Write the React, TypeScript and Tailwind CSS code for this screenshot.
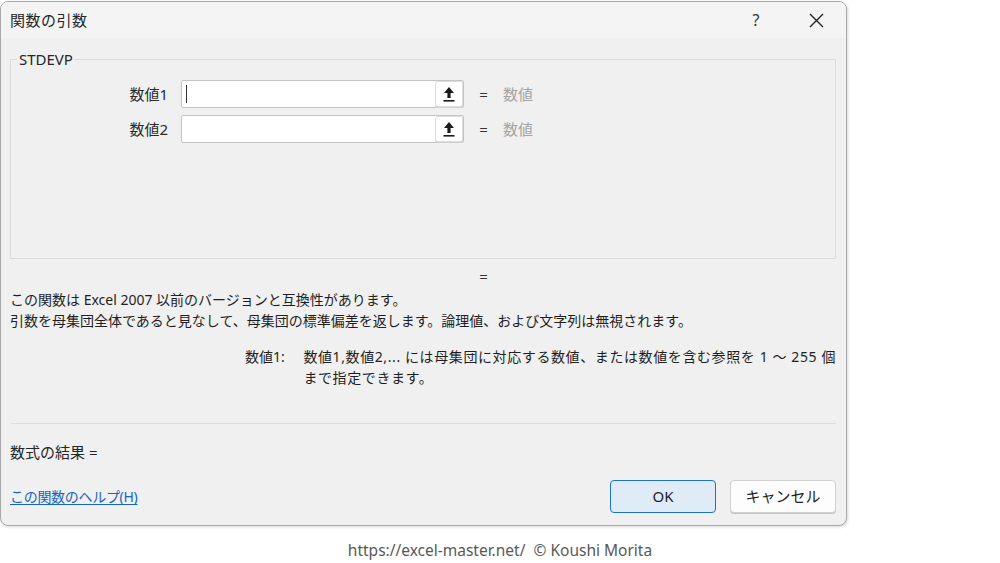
import React from "react";

function UploadIcon() {
  return (
    <svg width="14" height="18" viewBox="0 0 14 18">
      <path d="M7 2 L12 8 L8.6 8 L8.6 13 L5.4 13 L5.4 8 L2 8 Z" fill="#1a1a1a" />
      <rect x="1.5" y="15" width="11" height="1.6" fill="#1a1a1a" />
    </svg>
  );
}

function ArgRow({ label, cursor }: { label: string; cursor?: boolean }) {
  return (
    <div className="flex items-center h-[28px]">
      <div className="w-[157px] text-right text-[15px] text-[#2b2b2b] leading-[20px]">{label}</div>
      <div className="ml-[13px] w-[283px] h-[28px] flex items-stretch bg-white border border-[#c4c4c4] rounded-[2px]">
        <div className="flex-1 flex items-center pl-[4px]">
          {cursor && <span className="block w-[1px] h-[18px] bg-[#333]" />}
        </div>
        <div className="w-[28px] flex items-center justify-center bg-white border border-[#dcdcdc] rounded-[3px] shadow-[0_1px_0_#cfcfcf]">
          <UploadIcon />
        </div>
      </div>
      <div className="ml-[14px] text-[15px] text-[#333] w-[11px] text-center">=</div>
      <div className="ml-[14px] text-[15px] text-[#a3a3a3]">数値</div>
    </div>
  );
}

export default function App() {
  return (
    <div className="w-[1000px] h-[563px] bg-white font-['Noto_Sans','Noto_Sans_CJK_JP',sans-serif] text-[#1f1f1f] overflow-hidden">
      <div className="pt-[1px]">
        <div className="w-[847px] h-[525px] border border-[#a8a8a8] rounded-[8px] bg-[#f0f0f0] overflow-hidden flex flex-col shadow-[1px_1px_3px_rgba(0,0,0,0.15)]">
          {/* title bar */}
          <div className="h-[36px] shrink-0 flex items-center bg-[#f4f4f4] pl-[9px]">
            <div className="text-[15px] text-[#262626] leading-[20px] tracking-[0.5px]">関数の引数</div>
            <div className="flex-1" />
            <div className="text-[16px] text-[#333] w-[20px] text-center mr-[20px]">?</div>
            <div className="w-[60px] flex justify-center">
              <svg width="15" height="15" viewBox="0 0 15 15">
                <path d="M1 1 L14 14 M14 1 L1 14" stroke="#222" strokeWidth="1.4" />
              </svg>
            </div>
          </div>

          <div className="pl-[9px] pr-[10px] flex flex-col">
            <fieldset className="mt-[11px] h-[210px] border border-[#dadada] rounded-[1px]">
              <legend className="ml-[6px] px-[2px] text-[15px] leading-[20px] text-[#262626]">STDEVP</legend>
              <div className="pt-[11px] flex flex-col gap-[7px]">
                <ArgRow label="数値1" cursor />
                <ArgRow label="数値2" />
              </div>
            </fieldset>

            <div className="mt-[7px] h-[20px] leading-[20px] pl-[468px] text-[15px] text-[#333]">
              <span className="inline-block w-[11px] text-center">=</span>
            </div>

            <div className="mt-[3px] text-[14px] leading-[21px] text-[#1f1f1f] whitespace-nowrap">
              <div>この関数は Excel 2007 以前のバージョンと互換性があります。</div>
              <div>引数を母集団全体であると見なして、母集団の標準偏差を返します。論理値、および文字列は無視されます。</div>
            </div>

            <div className="mt-[15px] flex text-[14px] leading-[21px] whitespace-nowrap">
              <div className="ml-[235px] w-[60px]">数値1:</div>
              <div>
                <div className="tracking-[0.6px]">数値1,数値2,... には母集団に対応する数値、または数値を含む参照を 1 ～ 255 個</div>
                <div className="tracking-[0.6px]">まで指定できます。</div>
              </div>
            </div>

            <div className="mt-[35px] h-[1px] bg-[#dcdcdc] ml-[1px]" />

            <div className="mt-[18px] h-[20px] leading-[20px] text-[15px] text-[#262626]">数式の結果 =</div>

            <div className="mt-[18px] flex items-center">
              <a className="text-[14px] tracking-[-0.3px] text-[#1565c0] underline underline-offset-2 cursor-pointer">この関数のヘルプ(H)</a>
              <div className="flex-1" />
              <button className="w-[106px] h-[33px] rounded-[4px] border border-[#1a73c8] bg-[#dfebf7] text-[15px] text-[#1f1f1f]">OK</button>
              <button className="ml-[14px] w-[106px] h-[33px] rounded-[4px] border border-[#d0d0d0] bg-[#fdfdfd] text-[15px] text-[#1f1f1f] shadow-[0_1px_0_#c4c4c4]">キャンセル</button>
            </div>
          </div>
        </div>
      </div>
      <div className="h-[50px] flex items-center justify-center text-[15.5px] text-[#595959] font-['Noto_Sans',sans-serif]">
        https://excel-master.net/&nbsp;&nbsp;© Koushi Morita
      </div>
    </div>
  );
}
